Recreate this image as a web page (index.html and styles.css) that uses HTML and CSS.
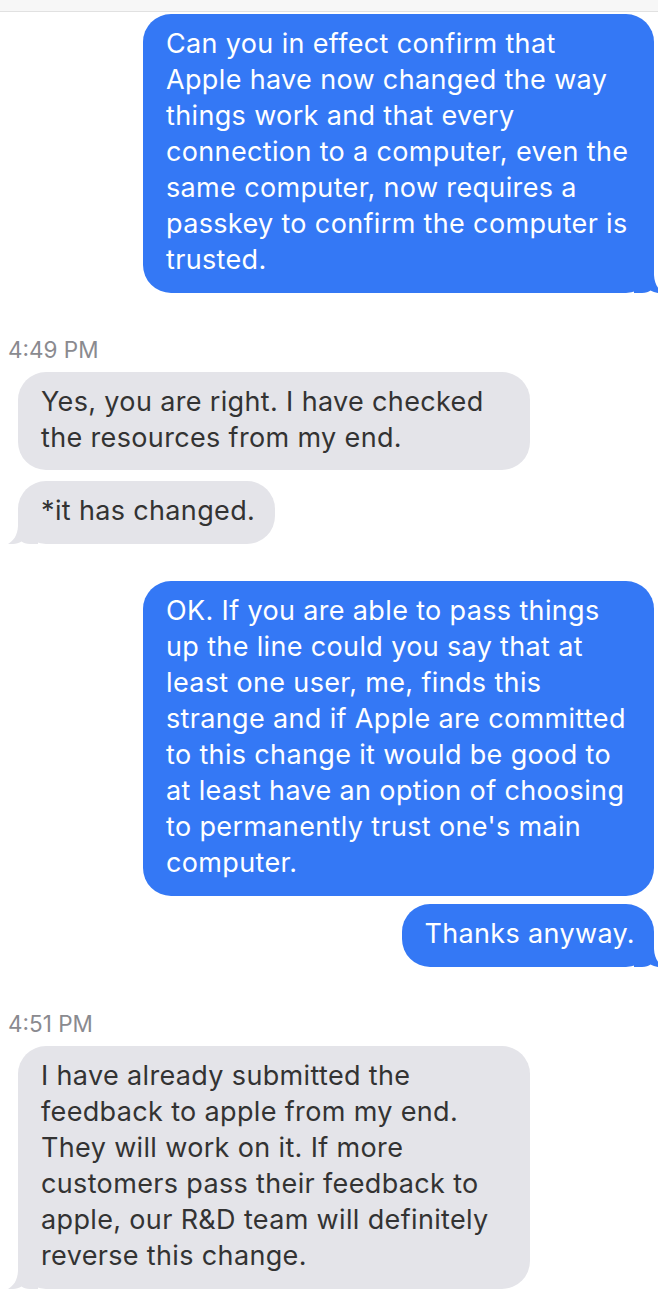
FILE: index.html
```html
<!DOCTYPE html>
<html>
<head>
<meta charset="utf-8">
<link rel="stylesheet" href="styles.css">
</head>
<body>
<div class="topbar"></div>
<div class="thread">
  <div class="msg sent first tail">
    <p>Can you in effect confirm that Apple have now changed the way things work and that every connection to a computer, even the same computer, now requires a passkey to confirm the computer is trusted.</p>
    <svg class="tail-svg" viewBox="0 0 30 30"><path d="M10 0 L30 0 L30 30 L22 30 C18 30 15.5 29 13.5 27.5 C10 29.6 5 30.4 0 30 C5 27 9.5 22 10 12 Z"/></svg>
  </div>
  <div class="time t1">4:49 PM</div>
  <div class="msg recv g1">
    <p>Yes, you are right. I have checked the resources from my end.</p>
  </div>
  <div class="msg recv g2 tail">
    <p>*it has changed.</p>
    <svg class="tail-svg" viewBox="0 0 30 30"><path d="M10 0 L30 0 L30 30 L22 30 C18 30 15.5 29 13.5 27.5 C10 29.6 5 30.4 0 30 C5 27 9.5 22 10 12 Z"/></svg>
  </div>
  <div class="msg sent b2">
    <p>OK. If you are able to pass things up the line could you say that at least one user, me, finds this strange and if Apple are committed to this change it would be good to at least have an option of choosing to permanently trust one's main computer.</p>
  </div>
  <div class="msg sent b3 tail">
    <p>Thanks anyway.</p>
    <svg class="tail-svg" viewBox="0 0 30 30"><path d="M10 0 L30 0 L30 30 L22 30 C18 30 15.5 29 13.5 27.5 C10 29.6 5 30.4 0 30 C5 27 9.5 22 10 12 Z"/></svg>
  </div>
  <div class="time t2">4:51 PM</div>
  <div class="msg recv g3 tail">
    <p>I have already submitted the feedback to apple from my end. They will work on it. If more customers pass their feedback to apple, our R&amp;D team will definitely reverse this change.</p>
    <svg class="tail-svg" viewBox="0 0 30 30"><path d="M10 0 L30 0 L30 30 L22 30 C18 30 15.5 29 13.5 27.5 C10 29.6 5 30.4 0 30 C5 27 9.5 22 10 12 Z"/></svg>
  </div>
</div>
</body>
</html>
```

FILE: styles.css
```css
html, body {
  margin: 0;
  padding: 0;
  background: #ffffff;
  overflow-x: hidden;
}
body {
  font-family: Inter, "Noto Sans", sans-serif;
  width: 658px;
  height: 1308px;
  overflow: hidden;
}
.topbar {
  height: 11px;
  background: #f7f7f7;
  border-bottom: 1px solid #e1e1e1;
}
.thread {
  display: flex;
  flex-direction: column;
  padding: 0 4px 0 8px;
}
.msg {
  position: relative;
  max-width: 511px;
  box-sizing: border-box;
  border-radius: 28px;
  padding: 12px 20px 14px 23px;
  font-size: 27px;
  letter-spacing: 0.35px;
  line-height: 36px;
}
.msg p {
  margin: 0;
}
.sent {
  align-self: flex-end;
  background: #3478f5;
  color: #ffffff;
}
.recv {
  align-self: flex-start;
  margin-left: 10px;
  background: #e4e4e9;
  color: #333333;
  max-width: 512px;
}
.tail-svg {
  position: absolute;
  bottom: 0;
  width: 30px;
  height: 30px;
}
.recv .tail-svg {
  left: -10px;
  fill: #e4e4e9;
}
.sent .tail-svg {
  right: -10px;
  fill: #3478f5;
  transform: scaleX(-1);
}
.first {
  margin-top: 2px;
  padding-bottom: 15px;
}
.time {
  font-size: 22.5px;
  line-height: 24px;
  color: #8a8a8f;
}
.t1 {
  margin-top: 45px;
}
.g1 {
  margin-top: 10px;
}
.g2 {
  margin-top: 11px;
  padding-bottom: 15px;
}
.b2 {
  margin-top: 37px;
  padding-bottom: 15px;
}
.b3 {
  margin-top: 8px;
  padding: 12px 19px 15px 22px;
}
.t2 {
  margin-top: 45px;
}
.g3 {
  margin-top: 10px;
  padding-bottom: 15px;
}
```
